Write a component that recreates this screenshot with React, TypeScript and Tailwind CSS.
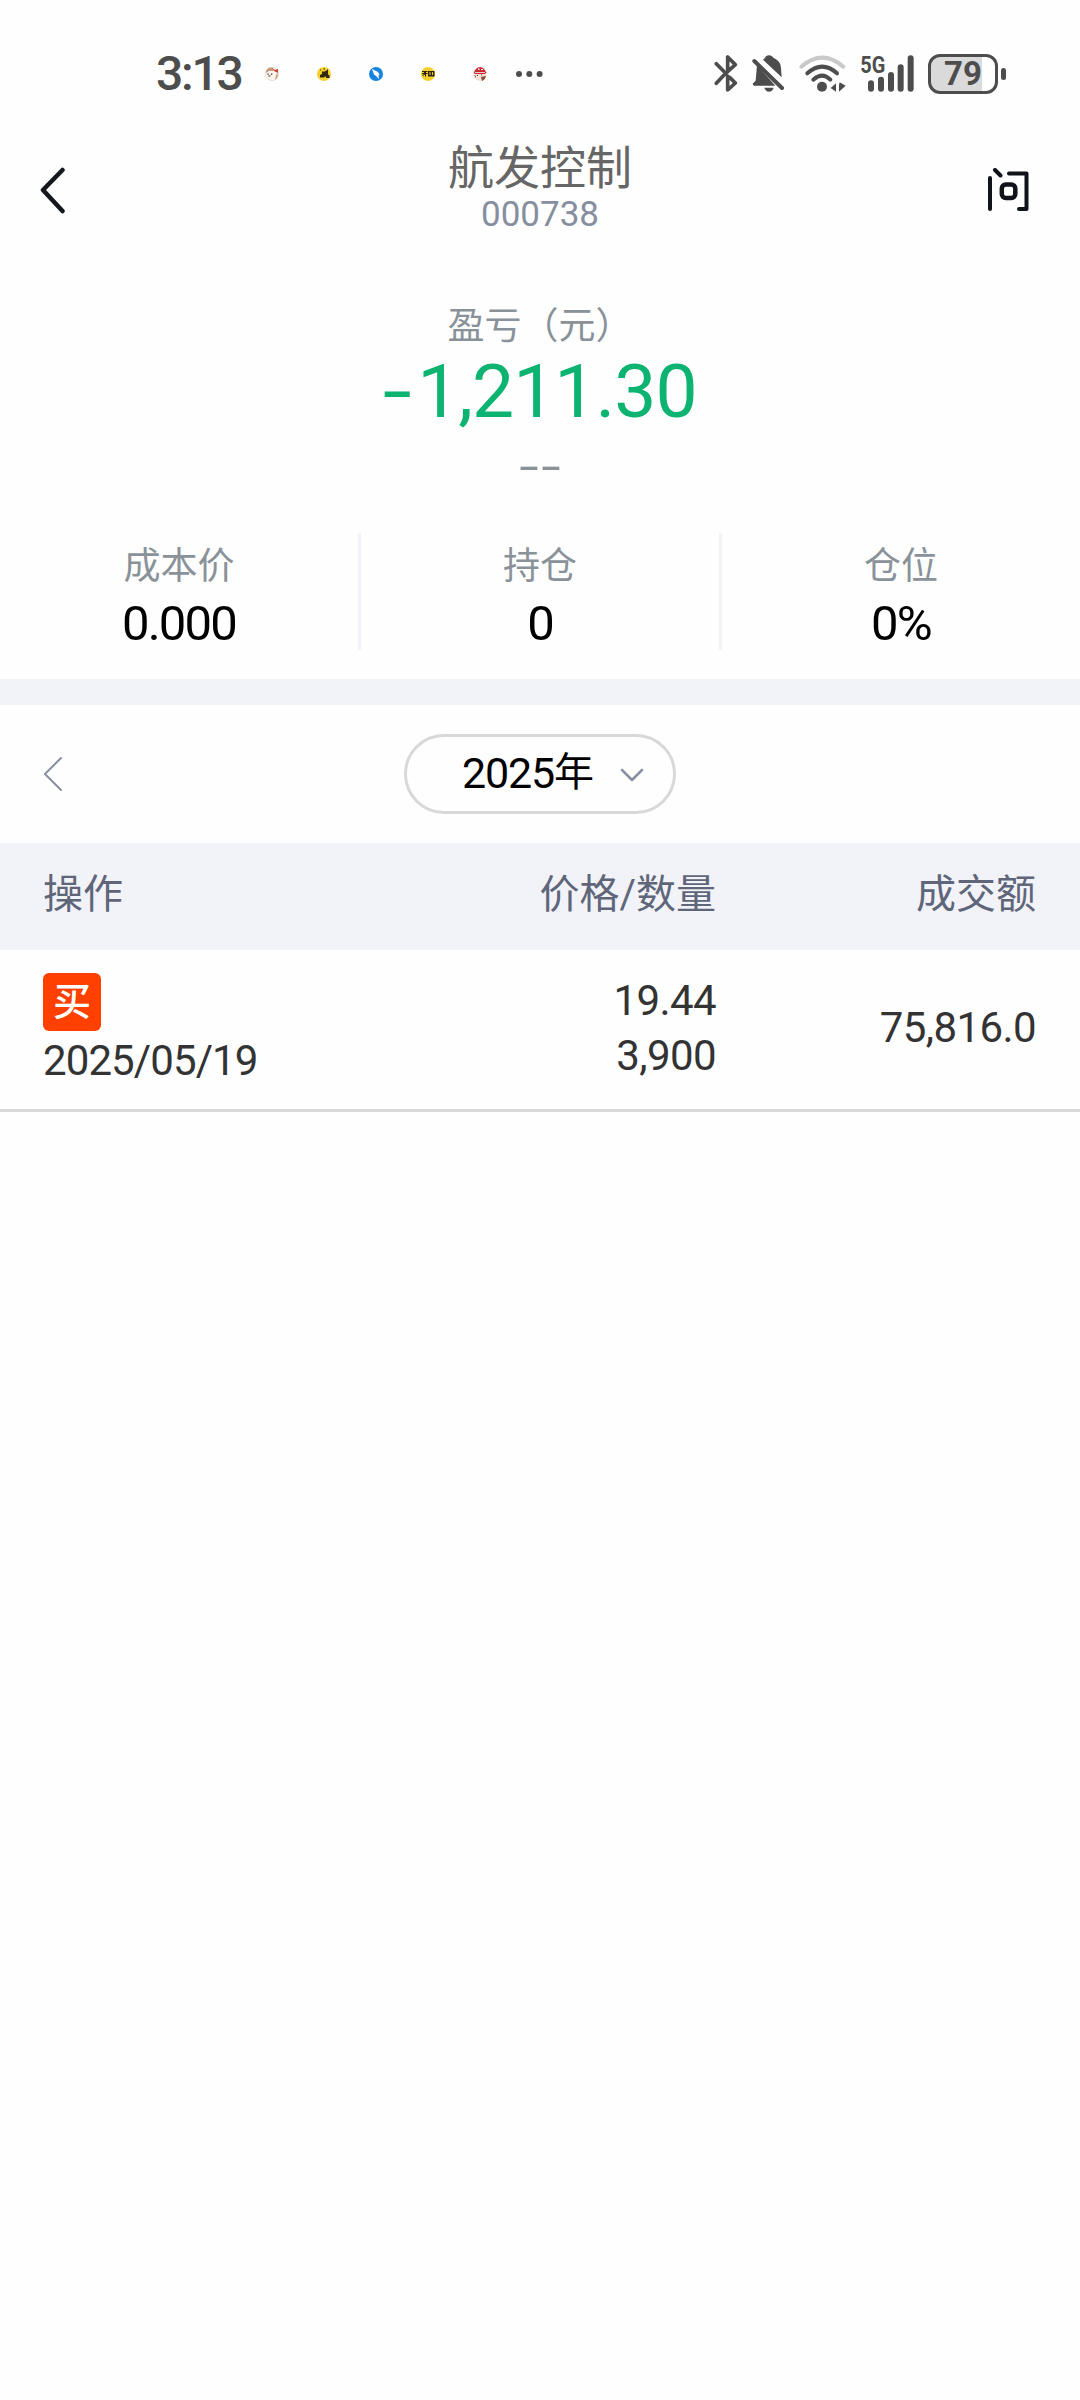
import type { ReactNode } from "react";

const stats = [
  { label: "成本价", value: "0.000" },
  { label: "持仓", value: "0" },
  { label: "仓位", value: "0%" },
];

const trades = [
  { id: 1, side: "买", date: "2025/05/19", price: "19.44", amount: "3,900", total: "75,816.0" },
];

function NotificationIcons() {
  return (
    <div className="ml-[24px] flex items-center gap-[38px]">
      <svg className="size-[14px]" viewBox="0 0 14 14">
        <circle cx="7" cy="7" r="6.6" fill="#fbf3ec" stroke="#e3cfc0" strokeWidth="0.6" />
        <path d="M1 4Q3 0 8 0.6L8 4Q4 3 1 6z" fill="#c49a7c" />
        <path d="M7 1l3 2 3-1v4l-4-2z" fill="#d0432b" />
        <path d="M12.5 6Q14 10 10 13l1-5z" fill="#c9a284" />
        <path d="M2.5 6.5h1.3v1.3H2.5zM6 6.5h1.3v1.3H6zM3.5 8.5h2v1h-2z" fill="#332" />
      </svg>
      <svg className="size-[14px]" viewBox="0 0 14 14">
        <circle cx="7" cy="7" r="7" fill="#f6cf2d" />
        <path d="M3 2.500h1v1H3zM6.500 1.500h1.500v1H6.500zM10 2.500h1v1h-1zM5 4.500h3l1-1h2v4l1.500 1v2.500H9V9.500H7.500v1H3V8l2-1z" fill="#2f2708" />
      </svg>
      <svg className="size-[14px]" viewBox="0 0 14 14">
        <circle cx="7" cy="7" r="7" fill="#1683dd" />
        <path d="M3 2l6 3 1.5 2.5-1 1 .5 3.5-3-3-2-1.5z" fill="#fff" />
      </svg>
      <svg className="size-[14px]" viewBox="0 0 14 14">
        <circle cx="7" cy="7" r="7" fill="#f4cf2a" />
        <path d="M1 4h5.5v1H5v1h1.5v1H5v2.500H4V7.500L2 9H1l2-2H1V6h2V5H1zM7 4h6.500v5.500H7zM8.500 5v3h1V5zM11 5v3h1V5z" fill="#2b2405" fillRule="evenodd" />
      </svg>
      <svg className="size-[14px]" viewBox="0 0 14 14">
        <circle cx="7" cy="7.500" r="6.500" fill="#f3e1d8" />
        <path d="M0.500 6Q3 0 7 0t6.500 6l-2 1-9 0z" fill="#c9282f" />
        <path d="M5 1.500h1.500v1.500H5zM8 2h2v1H8zM2 5h10v0.800H2z" fill="#fff" />
        <path d="M8 10l5-1Q12 13 9 14zM1 8l2 1v2z" fill="#8a4b33" />
        <path d="M4 8h1v1H4zM8 7.500h1v1H8z" fill="#332" />
      </svg>
    </div>
  );
}

function StatusBar() {
  return (
    <div className="flex h-[130px] items-center pt-[17px] pl-[156px] text-[#4d4d4d]">
      <span className="w-[85px] text-[48px] leading-none font-medium tracking-[-2.2px] whitespace-nowrap">3:13</span>
      <NotificationIcons />
      <svg className="ml-[29px] h-[6px] w-[27px]" viewBox="0 0 27 6" fill="currentColor">
        <circle cx="3" cy="3" r="3" />
        <circle cx="13.300" cy="3" r="3" />
        <circle cx="23.600" cy="3" r="3" />
      </svg>

      {/* bluetooth, muted bell, wifi */}
      <svg className="ml-[171px] h-[37px] w-[24px]" viewBox="42 43 72 111" fill="none" stroke="currentColor" strokeWidth="11" strokeLinecap="round" strokeLinejoin="round">
        <path d="M49 69L77 98L49 128M77 98L106 72L83 49V92M83 106V148L106 127L89 110M77 98L83 92" />
      </svg>
      <svg className="ml-[14px] h-[37px] w-[33px]" viewBox="157 43 99 111" fill="currentColor">
        <path d="M172 73L227 135H163Q158 133 160 128L168 120Z" />
        <path d="M190 57Q197 52 199 47Q208 41 217 47Q220 52 228 55Q243 64 244 82L246 110Z" />
        <path d="M194 141H222Q218 153 208 153T194 141Z" />
        <path d="M164 61L247 142" stroke="currentColor" strokeWidth="12" strokeLinecap="round" />
      </svg>
      <svg className="ml-[14px] h-[37px] w-[47px]" viewBox="298 43 141 111" fill="none" stroke="currentColor" strokeWidth="12" strokeLinecap="round">
        <path d="M305 78Q368 24 431 78" stroke="#c9c9c9" />
        <path d="M323 98Q368 58 412 98M341 117Q368 93 392 117" />
        <circle cx="367" cy="138" r="15" fill="currentColor" stroke="none" />
        <path d="M409 128V153L393 142ZM418 132V153L438 135L420 125Z" fill="currentColor" stroke="none" />
      </svg>

      <svg className="ml-[14px] h-[37px] w-[54px] overflow-visible" viewBox="480 43 162 111" fill="none" stroke="currentColor" strokeWidth="18" strokeLinecap="round">
        <path d="M513 128V144M543 117V144M573 103V144M602 80V144M632 53V144" />
        <text x="481" y="97" fill="currentColor" stroke="none" fontSize="69" fontWeight="700" textLength="75" lengthAdjust="spacingAndGlyphs" fontFamily="Roboto, sans-serif">5G</text>
      </svg>
      <div className="ml-[14px] flex items-center gap-[3px]">
        <div className="flex h-[40px] w-[70px] items-center justify-center rounded-[12px] border-[3px] border-[#4d4d4d] bg-linear-to-r from-[#dadada] from-[79%] to-white to-[79%] text-[33px] leading-none font-bold">
          79
        </div>
        <div className="h-[12px] w-[5px] rounded-full bg-[#4d4d4d]" />
      </div>
    </div>
  );
}

function Header() {
  return (
    <header className="flex h-[120px] items-center justify-between pr-[50px] pl-[38px]">
      <svg className="h-[48px] w-[30px]" viewBox="0 0 30 48" fill="none" stroke="#14171c" strokeWidth="4.500" strokeLinecap="round" strokeLinejoin="round">
        <path d="M24.500 4L5 24L24.500 45" />
      </svg>
      <div className="ml-[25px] flex flex-col items-center pb-[6px]">
        <h1 className="text-[46px] leading-[56px] text-[#666666]">航发控制</h1>
        <span className="text-[35px] leading-[38px] text-[#868e9f]">000738</span>
      </div>
      <svg className="h-[44px] w-[43px]" viewBox="987 168 43 44" fill="none" stroke="#10131a" strokeWidth="4" strokeLinecap="round" strokeLinejoin="round">
        <path d="M990 178V209M995 170L1000.500 175.500M1009 173.500H1026.500V209H1019" />
        <rect x="1001.800" y="184.500" width="13.500" height="13.500" rx="4" strokeWidth="4.500" />
      </svg>
    </header>
  );
}

function Summary() {
  return (
    <section className="flex h-[283px] flex-col items-center pt-[53px]">
      <div className="text-[37px] leading-[48px] text-[#8a9299]">盈亏（元）</div>
      <div className="ml-[8px] flex text-[75px] leading-[80px] text-[#0db370]">
        <span className="mr-[5px] inline-block origin-right scale-x-140">-</span>
        <span className="tracking-[-1px]">1,211.30</span>
      </div>
      <div className="mt-[12px] flex gap-[10px] text-[44px] leading-[48px] text-[#8a9299]">
        <span className="inline-block scale-x-160">-</span>
        <span className="inline-block scale-x-160">-</span>
      </div>
    </section>
  );
}

function Stats() {
  return (
    <section className="flex h-[146px]">
      {stats.map((s) => (
        <div key={s.label} className="flex h-[117px] flex-1 flex-col items-center border-r-[3px] border-[#f2f3f7] pt-[10px] last:border-r-0">
          <span className="text-[37px] leading-[48px] text-[#8a9299]">{s.label}</span>
          <span className="mt-[6px] text-[49px] leading-[54px] tracking-[-1.8px] text-black">{s.value}</span>
        </div>
      ))}
    </section>
  );
}

function YearPicker() {
  return (
    <div className="flex h-[138px] items-center pl-[42px]">
      <svg className="h-[36px] w-[22px]" viewBox="0 0 22 36" fill="none" stroke="#8a90a0" strokeWidth="2" strokeLinecap="round" strokeLinejoin="round">
        <path d="M19 2L3 18L19 34" />
      </svg>
      <button className="ml-[340px] flex h-[80px] w-[272px] items-center rounded-full border-[3px] border-[#d8d8d8] pb-[2px] pl-[55px] text-black">
        <span className="text-[43px] tracking-[-1.200px]">2025</span>
        <span className="text-[40px]">年</span>
        <svg className="mt-[3px] ml-[26px] h-[14px] w-[24px]" viewBox="0 0 24 14" fill="none" stroke="#888fa0" strokeWidth="2.500" strokeLinecap="round" strokeLinejoin="round">
          <path d="M2 2L12 12L22 2" />
        </svg>
      </button>
    </div>
  );
}

function Row({ children, className }: { children: ReactNode; className: string }) {
  return <div className={`grid grid-cols-[300px_373px_320px] px-[43px] ${className}`}>{children}</div>;
}

function TradeTable() {
  return (
    <section>
      <Row className="h-[107px] items-center bg-[#f2f3f8] pb-[3px] text-[40px] text-[#5f667a]">
        <span>操作</span>
        <span className="text-right">价格/数量</span>
        <span className="text-right">成交额</span>
      </Row>
      {trades.map((t) => (
        <Row key={t.id} className="h-[162px] border-b-[3px] border-[#d8d8d8] text-[42px] tracking-[-0.6px] text-[#333333]">
          <div className="flex flex-col pt-[23px]">
            <span className="flex size-[58px] items-center justify-center rounded-[6px] bg-[#ff4000] text-[38px] leading-none font-medium tracking-normal text-white">
              {t.side}
            </span>
            <span className="mt-[5px] leading-[50px] tracking-[-0.9px]">{t.date}</span>
          </div>
          <div className="flex flex-col pt-[23px] text-right leading-[55px]">
            <span>{t.price}</span>
            <span>{t.amount}</span>
          </div>
          <div className="pt-[50px] text-right leading-[55px]">{t.total}</div>
        </Row>
      ))}
    </section>
  );
}

export default function App() {
  return (
    <div className="min-h-[2400px] w-[1080px] bg-[#fefefe] font-['Roboto','Noto_Sans_CJK_SC',sans-serif]">
      <StatusBar />
      <Header />
      <Summary />
      <Stats />
      <div className="h-[26px] bg-[#f2f3f8]" />
      <YearPicker />
      <TradeTable />
    </div>
  );
}
